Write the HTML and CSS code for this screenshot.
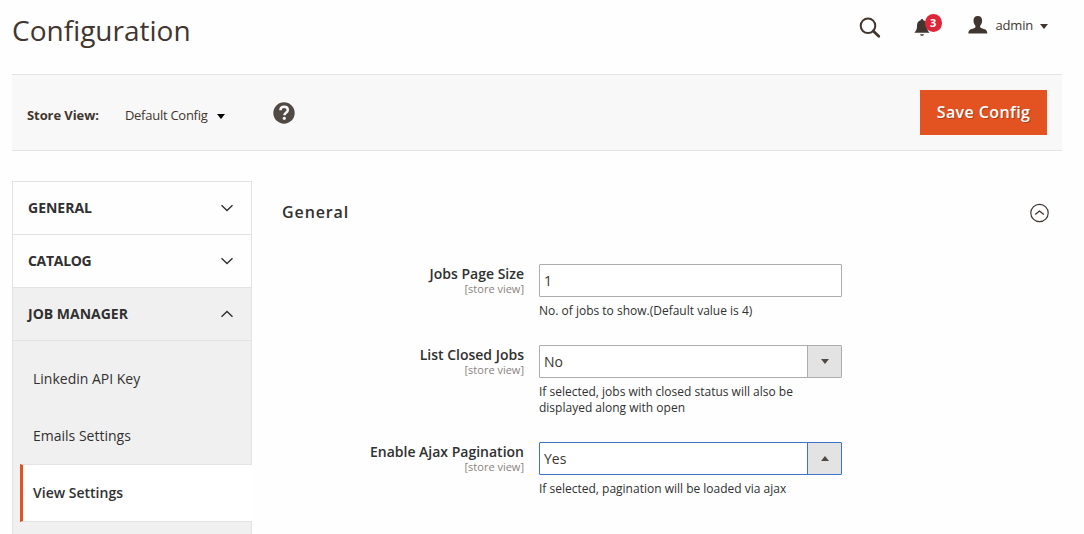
FILE: index.html
```html
<!DOCTYPE html>
<html lang="en">
<head>
<meta charset="utf-8">
<title>Configuration</title>
<link rel="stylesheet" href="styles.css">
</head>
<body>
<header class="page-header">
  <h1 class="page-title">Configuration</h1>
  <div class="header-tools">
    <svg class="icon-search" width="22" height="22" viewBox="0 0 22 22"><circle cx="9" cy="8.8" r="7.300" fill="none" stroke="#41362f" stroke-width="2"/><path d="M14.200 14l5.600 5.300" stroke="#41362f" stroke-width="2.700" stroke-linecap="round"/></svg>
    <div class="notifications">
      <svg class="icon-bell" width="16" height="17" viewBox="0 0 16 17"><path d="M8 0c.9 0 1.300.6 1.300 1.300C12 2 13 4 13 6.500c0 4 .7 5 2.600 7.300H.4c1.900-2.300 2.600-3.300 2.600-7.300C3 4 4 2 6.700 1.300 6.700.6 7.100 0 8 0zM6 15.200h4c-.3 1.100-1 1.600-2 1.600s-1.700-.5-2-1.600z" fill="#41362f"/></svg>
      <span class="badge">3</span>
    </div>
    <div class="account">
      <svg width="20" height="18" viewBox="0 0 20 18"><path d="M9.800 0c3 0 4.300 1.800 4.300 4.500 0 2.300-.8 4.200-1.900 5.300-.3 1.500.1 2 1.500 2.500 3.300 1.100 5.600 1.300 5.600 5.200H.4c0-3.900 2.300-4.100 5.600-5.200 1.300-.5 1.700-1 1.400-2.500C6.300 8.700 5.500 6.800 5.500 4.500 5.500 1.800 6.800 0 9.800 0z" fill="#41362f"/></svg>
      <span class="account-name">admin</span>
      <span class="caret"></span>
    </div>
  </div>
</header>
<div class="toolbar">
  <span class="toolbar-label">Store View:</span>
  <span class="toolbar-value">Default Config</span>
  <span class="caret caret-black"></span>
  <span class="help"><svg width="22" height="22" viewBox="0 0 22 22"><circle cx="11" cy="11" r="10.700" fill="#514943"/><path d="M7.400 8.200C7.500 5.900 9 4.800 11.100 4.800c2.200 0 3.700 1.200 3.700 3.100 0 2.900-3.400 2.800-3.400 5.400" fill="none" stroke="#f8f8f8" stroke-width="2.500"/><circle cx="11.300" cy="16.300" r="1.600" fill="#f8f8f8"/></svg></span>
  <button class="save">Save Config</button>
</div>
<main class="columns">
  <nav class="config-nav">
    <div class="nav-section"><span>GENERAL</span><svg width="14" height="8" viewBox="0 0 14 8"><path d="M1.500 1.200L7 6.500l5.500-5.300"/></svg></div>
    <div class="nav-section"><span class="tight">CATALOG</span><svg width="14" height="8" viewBox="0 0 14 8"><path d="M1.500 1.200L7 6.500l5.500-5.300"/></svg></div>
    <div class="nav-section open"><span>JOB MANAGER</span><svg width="14" height="8" viewBox="0 0 14 8"><path d="M1.500 6.800L7 1.500l5.500 5.300"/></svg></div>
    <div class="nav-items">
      <a class="nav-item">Linkedin API Key</a>
      <a class="nav-item">Emails Settings</a>
      <a class="nav-item active">View Settings</a>
    </div>
  </nav>
  <section class="settings">
    <div class="section-head">
      <h2 class="section-title">General</h2>
      <svg class="collapse" width="20" height="20" viewBox="0 0 20 20" fill="none" stroke="#41362f"><circle cx="9.500" cy="10" r="8.700" stroke-width="1.200"/><path d="M5.200 11.600L9.500 8l4.300 3.600" stroke-width="1.300"/></svg>
    </div>
    <div class="field">
      <div class="field-label"><span class="label-text">Jobs Page Size</span><span class="scope">[store view]</span></div>
      <div class="control"><div class="input">1</div><p class="note">No. of jobs to show.(Default value is 4)</p></div>
    </div>
    <div class="field">
      <div class="field-label"><span class="label-text">List Closed Jobs</span><span class="scope">[store view]</span></div>
      <div class="control"><div class="input select">No<span class="select-button"><span class="arrow-down"></span></span></div><p class="note">If selected, jobs with closed status will also be<br>displayed along with open</p></div>
    </div>
    <div class="field">
      <div class="field-label"><span class="label-text">Enable Ajax Pagination</span><span class="scope">[store view]</span></div>
      <div class="control"><div class="input select focused">Yes<span class="select-button"><span class="arrow-up"></span></span></div><p class="note">If selected, pagination will be loaded via ajax</p></div>
    </div>
  </section>
</main>
</body>
</html>
```
FILE: styles.css
```css
* { box-sizing: border-box; }
body {
  margin: 0;
  height: 534px;
  overflow: hidden;
  background: #fefefe;
  color: #41362f;
  font-family: "Open Sans", sans-serif;
  font-size: 14px;
}
.page-header {
  display: flex;
  justify-content: space-between;
  height: 74px;
  padding: 0 36px 0 12px;
}
.page-title {
  margin: 10px 0 0;
  font-size: 28px;
  line-height: 40px;
  font-weight: 400;
}
.header-tools { display: flex; align-items: flex-start; }
.icon-search { margin-top: 17px; }
.notifications { position: relative; margin: 19px 0 0 33px; width: 28px; }
.icon-bell { display: block; }
.badge {
  position: absolute;
  left: 11px;
  top: -5px;
  width: 17px;
  height: 18px;
  border-radius: 9px;
  background: #df2638;
  color: #fff;
  font-size: 11px;
  font-weight: 700;
  line-height: 18px;
  text-align: center;
}
.account { display: flex; align-items: center; margin: 16px 0 0 26px; height: 18px; }
.account-name { margin-left: 8px; font-size: 13px; letter-spacing: -.2px; }
.caret {
  margin: 2px 0 0 7px;
  border: 4px solid transparent;
  border-top: 5px solid #41362f;
  border-bottom: 0;
}
.toolbar {
  display: flex;
  align-items: center;
  width: 1050px;
  height: 77px;
  margin-left: 12px;
  padding: 0 15px;
  background: #f8f8f8;
  border-top: 1px solid #e3e3e3;
  border-bottom: 1px solid #e3e3e3;
  font-size: 13px;
}
.toolbar-label { margin-top: 5px; font-weight: 700; letter-spacing: -.08px; }
.toolbar-value { margin: 5px 0 0 26px; letter-spacing: -.26px; }
.caret-black { margin: 7px 0 0 9px; border-top-color: #000; }
.help { display: flex; margin-left: 48px; }
.save {
  margin-left: auto;
  width: 127px;
  height: 45px;
  padding: 0 0 2px;
  border: 0;
  background: #e35322;
  color: #fff;
  font: 600 16px "Open Sans", sans-serif;
  letter-spacing: .4px;
  text-shadow: 1px 1px 0 rgba(0, 0, 0, .25);
}
.columns { display: flex; padding: 30px 0 0 12px; }
.config-nav {
  width: 240px;
  height: 353px;
  border: 1px solid #e3e3e3;
  border-bottom: 0;
  color: #303030;
}
.nav-section {
  display: flex;
  align-items: center;
  justify-content: space-between;
  height: 53px;
  padding: 0 17px 0 15px;
  border-bottom: 1px solid #e3e3e3;
  font-weight: 700;
}
.nav-section span { padding-bottom: 2px; }
.tight { letter-spacing: -.3px; }
.nav-section svg { fill: none; stroke: #303030; stroke-width: 1.4; }
.open { background: #f0f0f0; }
.nav-items { height: 193px; padding: 9px 0 0 7px; background: #f0f0f0; }
.nav-item {
  display: block;
  height: 57px;
  padding-left: 13px;
  line-height: 57px;
}
.active {
  height: 58px;
  width: 232px;
  padding-left: 10px;
  border-left: 3px solid #e35322;
  border-top: 1px solid #e3e3e3;
  border-bottom: 1px solid #e3e3e3;
  background: #fff;
  font-weight: 600;
  line-height: 56px;
}
.settings { width: 768px; margin-left: 30px; }
.section-head { display: flex; align-items: center; justify-content: space-between; height: 62px; }
.collapse { margin-top: 2px; }
.section-title { margin: 0; font-size: 16px; font-weight: 600; letter-spacing: .9px; color: #303030; }
.field { display: flex; }
.section-head + .field { margin-top: 21px; }
.field + .field { margin-top: 26px; }
.field-label { width: 242px; padding-top: 1px; text-align: right; }
.label-text { display: block; font-weight: 600; line-height: 18px; color: #303030; }
.scope { display: block; font-size: 11px; line-height: 12px; color: #8a837f; }
.control { width: 303px; margin-left: 15px; }
.input {
  display: flex;
  justify-content: space-between;
  height: 33px;
  padding-left: 4px;
  border: 1px solid #adadad;
  border-radius: 1px;
  background: #fff;
  line-height: 32px;
}
.select-button {
  display: flex;
  align-items: center;
  justify-content: center;
  width: 34px;
  border-left: 1px solid #adadad;
  background: #e3e3e3;
}
.arrow-down, .arrow-up { border: 4px solid transparent; }
.arrow-down { border-top: 5px solid #514943; border-bottom: 0; }
.arrow-up { border-bottom: 5px solid #514943; border-top: 0; }
.focused, .focused .select-button { border-color: #3d73c9; }
.note { margin: 6px 0 0; font-size: 12px; line-height: 16px; color: #303030; }
```
